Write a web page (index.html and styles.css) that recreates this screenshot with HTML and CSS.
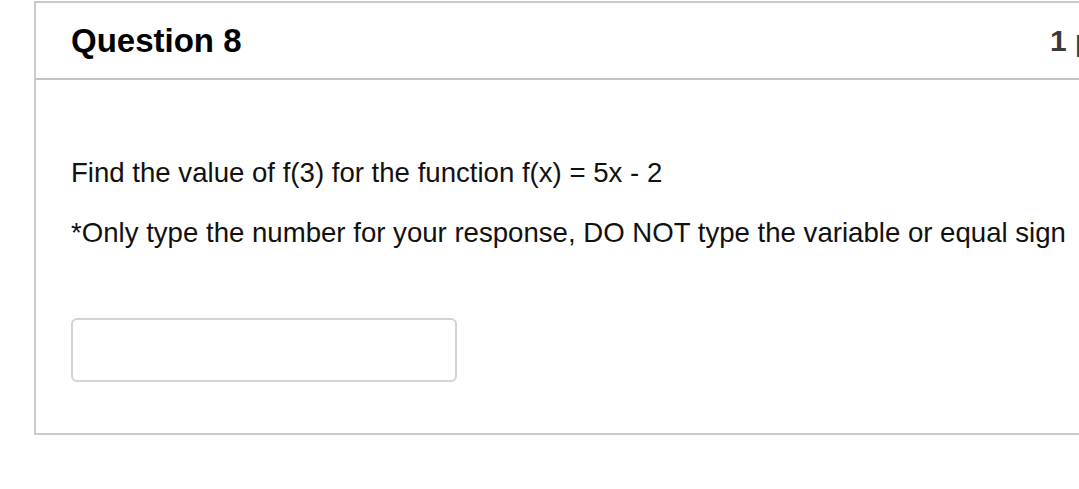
FILE: index.html
```html
<!DOCTYPE html>
<html lang="en">
<head>
<meta charset="utf-8">
<title>Question 8</title>
<link rel="stylesheet" href="styles.css">
</head>
<body>
  <div class="card">
    <div class="card-header">
      <h2 class="title">Question 8</h2>
      <span class="points">1 pts</span>
    </div>
    <div class="card-body">
      <p class="text">Find the value of f(3) for the function f(x) = 5x - 2</p>
      <p class="text">*Only type the number for your response, DO NOT type the variable or equal sign</p>
      <input class="answer" type="text" aria-label="Answer">
    </div>
  </div>
</body>
</html>
```

FILE: styles.css
```css
html, body {
  margin: 0;
  padding: 0;
  background: #ffffff;
  overflow: hidden;
}

body {
  font-family: "Liberation Sans", Arial, sans-serif;
  color: #111111;
  padding-top: 1px;
}

.card {
  margin-left: 34px;
  width: 1117px;
  border: 2px solid #cbcbcb;
}

.card-header {
  display: flex;
  align-items: center;
  height: 75px;
  padding: 0 36px 0 35px;
  border-bottom: 2px solid #c4c4c4;
}

.title {
  margin: 0;
  font-size: 33px;
  font-weight: bold;
  color: #000000;
  line-height: 40px;
}

.points {
  margin-left: auto;
  margin-right: -3px;
  font-size: 30px;
  font-weight: bold;
  color: #3a3a3a;
  line-height: 40px;
}

.card-body {
  padding: 77px 35px 51px 35px;
}

.text {
  margin: 0 0 28px 0;
  font-size: 27.6px;
  line-height: 32px;
  color: #111111;
  white-space: nowrap;
}

.text:last-of-type {
  margin-bottom: 0;
}

.answer {
  display: block;
  box-sizing: border-box;
  margin-top: 69px;
  width: 386px;
  height: 64px;
  border: 2px solid #d3d3d3;
  border-radius: 6px;
  background: #ffffff;
  outline: none;
  padding: 0 10px;
  font-family: inherit;
  font-size: 24px;
}
```
